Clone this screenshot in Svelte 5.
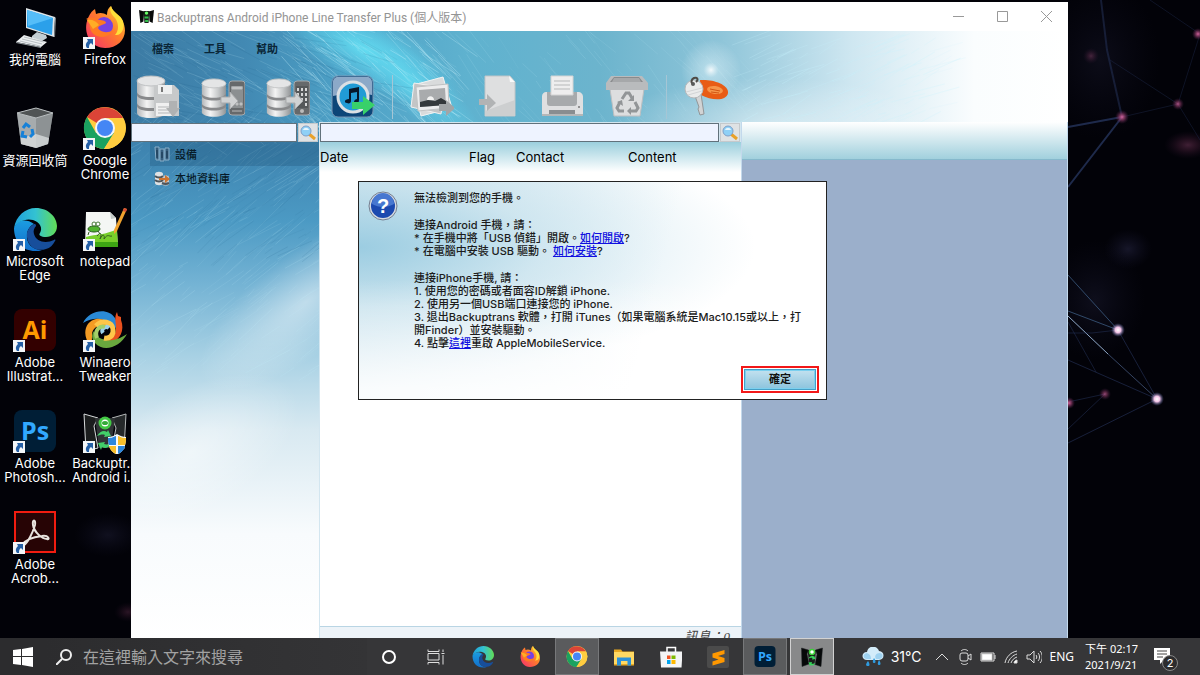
<script lang="ts">
  type Item = { icon: string; lines: string[]; shortcut?: boolean };

  const shortcuts: Item[] = [
    { icon: "pc", lines: ["我的電腦"] },
    { icon: "bin", lines: ["資源回收筒"] },
    { icon: "edge", lines: ["Microsoft", "Edge"], shortcut: true },
    { icon: "ai", lines: ["Adobe", "Illustrat..."], shortcut: true },
    { icon: "ps", lines: ["Adobe", "Photosh..."], shortcut: true },
    { icon: "acrobat", lines: ["Adobe", "Acrob..."], shortcut: true },
    { icon: "firefox", lines: ["Firefox"], shortcut: true },
    { icon: "chrome", lines: ["Google", "Chrome"], shortcut: true },
    { icon: "notepad", lines: ["notepad"], shortcut: true },
    { icon: "winaero", lines: ["Winaero", "Tweaker"], shortcut: true },
    { icon: "backup", lines: ["Backuptr...", "Android i..."], shortcut: true },
  ];

  const menus = ["檔案", "工具", "幫助"];

  const toolGroups = [
    ["db-save", "db-android", "db-iphone", "itunes"],
    ["photos", "export", "printer", "trash"],
    ["key"],
  ];

  const taskbarApps = [
    { icon: "cortana" },
    { icon: "taskview" },
    { icon: "edge" },
    { icon: "firefox" },
    { icon: "chrome", open: true },
    { icon: "explorer" },
    { icon: "store" },
    { icon: "sublime" },
    { icon: "ps", open: true },
    { icon: "line", open: true, active: true },
  ];

  // brushed texture behind the toolbar and the sidebar
  let seed = 7;
  function rand() {
    seed = (seed * 16807) % 2147483647;
    return seed / 2147483647;
  }

  function streaks(n: number, x: number, y: number, w: number, h: number, angle: number, alpha: number) {
    return Array.from({ length: n }, () => {
      const a = ((angle + rand() * 24 - 12) * Math.PI) / 180;
      const len = 8 + rand() * 44;
      const x1 = x + rand() * w;
      const y1 = y + rand() * h;
      return {
        x1,
        y1,
        x2: x1 + Math.cos(a) * len,
        y2: y1 + Math.sin(a) * len,
        o: alpha * (0.3 + rand() * 0.7),
      };
    });
  }

  const light = [
    ...streaks(160, 0, 0, 230, 110, 28, 0.18),
    ...streaks(170, 150, 0, 170, 100, 40, 0.35),
    ...streaks(90, 300, 0, 320, 100, 50, 0.14),
    ...streaks(110, 600, 20, 200, 90, -24, 0.3),
    ...streaks(260, -20, 110, 210, 250, -38, 0.16),
  ];
  const dark = [
    ...streaks(80, 0, 0, 240, 100, 20, 0.14),
    ...streaks(80, -20, 100, 200, 150, -34, 0.12),
  ];
</script>

{#snippet database()}
  <path d="M1 6v32c0 3 6 5 14 5s14-2 14-5V6z" fill="url(#metal)" />
  <path d="M1 17c0 3 6 5 14 5s14-2 14-5v3c0 3-6 5-14 5S1 23 1 20zM1 28c0 3 6 5 14 5s14-2 14-5v3c0 3-6 5-14 5S1 34 1 31z" fill="#88898b" />
  <ellipse cx="15" cy="6" rx="14" ry="5" fill="#e4e5e6" stroke="#bfc1c3" />
{/snippet}

{#snippet icon(name: string)}
  <svg class="icon" viewBox="0 0 44 44" aria-hidden="true">
    {#if name === "pc"}
      <path d="M19 30l5-4 9 3 1 3-5 3-10-3z" fill="#c3cdd3" />
      <path d="M13 2l29 9-1 20-28-9z" fill="#dfe5e8" />
      <path d="M14 4l26 8-1 17-25-8z" fill="#2ba0ea" />
      <path d="M14 4l26 8-25 8z" fill="#55bdf8" />
      <path d="M42 11l1 1-1 19-1 0z" fill="#80878c" />
      <path d="M3 36l8-7 23 7-6 5z" fill="#eceff1" />
      <path d="M3 36l25 5v1L3 37z" fill="#8f979c" />
      <path d="M7 35l20 5M9 33l20 5M11 31l20 5" stroke="#b9bfc4" fill="none" />
    {:else if name === "bin"}
      <path d="M4 6l19-5 17 5-5 31-12 4-15-4z" fill="#747879" />
      <path d="M4 6l19 5 1 30-16-4z" fill="#a6abad" />
      <path d="M23 11l17-5-5 31-12 4z" fill="#8d9294" />
      <path d="M4 6l19-5 17 5-17 5z" fill="#505455" stroke="#b9bec0" />
      <path d="M8 31l15-4 13 4-1 6-12 4-15-4z" fill="#dcdfe0" opacity=".75" />
      <g fill="none" stroke="#1681d8" stroke-width="3">
        <path d="M10 21l3-4 4 3M19 22l1 5-3 3M14 30l-5-1 1-5" />
      </g>
    {:else if name === "edge"}
      <path d="M1 20c0 14 9 23 21 23 3 0 5 0 7-1-10 0-16-7-15-15 0-5 3-9 7-11C13 10 4 12 1 20z" fill="url(#edgeBlue)" />
      <path d="M21 16c-5 3-8 8-7 13 1 10 10 15 19 12 4-1 7-4 9-8 1-1 0-2-1-1-8 4-18 2-20-6-1-3 0-6 2-8 0-2-1-2-2-2z" fill="#174e9b" />
      <path d="M1 20C3 8 12 0 23 0c12 0 21 9 21 18 0 7-5 11-11 11-5 0-8-2-6-4 3-5 0-11-7-13-8-2-16 2-19 8z" fill="url(#edgeGreen)" />
    {:else if name === "ai" || name === "ps"}
      <rect x="1" y="0" width="42" height="42" rx="8" fill={name === "ai" ? "#330000" : "#001e36"} />
      <text x="22" y="30" text-anchor="middle" font-size="25" font-weight="700" font-family="Open Sans, sans-serif" fill={name === "ai" ? "#ff9a00" : "#31a8ff"}>{name === "ai" ? "Ai" : "Ps"}</text>
    {:else if name === "acrobat"}
      <rect x="2" y="1" width="40" height="40" fill="#270405" stroke="#f21c10" stroke-width="2" />
      <path d="M9 34c3-5 11-8 20-9 7-1 8 4 5 3-5 0-13-7-14-14-1-6 3-6 2 0C20 21 15 32 10 35c-2 0-2-1-1-1z" fill="none" stroke="#e9e4df" stroke-width="2" />
    {:else if name === "firefox"}
      <path d="M5 12c2-5 5-8 7-9l1 5c4-2 8-1 11 1 0-4 1-7 4-9 1 6 8 8 11 14 8 14-1 28-17 28C8 42-1 27 5 12z" fill="url(#fox)" />
      <path d="M28 0c-2 4 0 8 4 12 4 5 4 13 0 17 7 1 10-7 8-14-2-6-10-8-12-15z" fill="#ffdf3a" />
      <circle cx="21" cy="20" r="9" fill="#7542e5" />
      <path d="M3 13c5-2 9-2 13 1 4 0 7 1 7 3-3 2-7 2-8 5 2 4 9 6 15 2-3 9-20 10-23-2-1-3 0-5 1-7z" fill="#ff7a24" />
      <path d="M4 14c5-1 9 1 12 5l-6 4z" fill="#ffad25" />
    {:else if name === "chrome"}
      <circle cx="22" cy="21" r="21" fill="#ffcd40" />
      <path d="M22 21L4 10a21 21 0 0 1 36 1H22z" fill="#db4437" />
      <path d="M4 10a21 21 0 0 0 17 32l10-16-18 0z" fill="#1aa260" />
      <path d="M22 11h18a21 21 0 0 1-19 31l10-16z" fill="#ffcd40" />
      <circle cx="22" cy="21" r="10" fill="#f3f6fa" />
      <circle cx="22" cy="21" r="8" fill="#4486f5" />
    {:else if name === "notepad"}
      <path d="M3 4h24l6 6 2 29H2z" fill="#f4f6f4" />
      <path d="M3 29c10-3 20-2 31-8l1 18H2z" fill="#78cf2b" />
      <path d="M2 34h33v5H2z" fill="#3da514" />
      <path d="M27 4l1 7 5-1z" fill="#c4cac8" />
      <ellipse cx="11" cy="21" rx="6" ry="3" fill="#51b32e" stroke="#265d1b" />
      <circle cx="11" cy="16" r="2" fill="#fff" stroke="#4a7a3a" />
      <circle cx="15" cy="16" r="2" fill="#fff" stroke="#4a7a3a" />
      <path d="M6 24l-1 3M15 23l2 3M14 28c4-5 5-2 3 3 3-6 5-4 4 0 4-6 5-2 8-3" stroke="#345b20" fill="none" />
      <path d="M41 0l3 1-10 22-3 3 0-4z" fill="#f0a22e" />
      <path d="M41 0l3 1-1 3-3-1z" fill="#d84c36" />
    {:else if name === "winaero"}
      <path d="M0 14C6 1 25-2 32 9c3 5 2 10-2 12C28 12 15 5 0 14z" fill="#2a8ad7" />
      <path d="M34 3l1 4 3 1 0 3c4 10-1 20-10 23-6 2-10 0-12-2 9 1 17-4 17-12 0-7-2-12 1-17z" fill="#e8501e" />
      <path d="M44 25c-7 13-23 19-32 9-3-4-4-8-1-12 3 9 17 14 33 3z" fill="#69a83e" />
      <path d="M8 37C-2 27 2 12 13 10c8-1 13 4 13 9-7-5-16-2-17 6 0 4 0 8-1 12z" fill="#f49b24" />
      <path d="M13 17c6-7 16-4 17 3 1 7-4 10-9 9" fill="none" stroke="#ffc649" stroke-width="5" />
      <path d="M20 24c-3-4 3-8 6-5" fill="none" stroke="#9ed0ea" stroke-width="4" />
      <path d="M14 29c-3-8 3-13 8-11" fill="none" stroke="#a5cf6a" stroke-width="4" />
    {:else if name === "backup"}
      <path d="M1 4l14 4-4 8 4 22-12 3z" fill="#1b1d1e" stroke="#d7dadb" />
      <path d="M29 8l14-4-2 35-12-1 4-20z" fill="#25282a" stroke="#b4b7b8" />
      <path d="M12 8h20l-4 30H16z" fill="#303436" />
      <circle cx="22" cy="13" r="5" fill="#fff" stroke="#42c744" stroke-width="3" />
      <ellipse cx="22" cy="13" rx="3" ry="2" fill="#36a93a" />
      <path d="M14 26c3-5 7-6 10-4l1-2 3 6-7 1 1-2c-3-1-5 0-8 1zM29 33c-3 5-7 6-10 4l-1 3-3-7 7-1-1 2c3 1 5 0 8-1z" fill="#42ce69" />
      <path d="M34 24c3 2 6 3 9 3 0 9-2 14-9 18-7-4-9-9-9-18 3 0 6-1 9-3z" fill="#f6fafb" />
      <path d="M33 26v9h-7c-1-3-1-4-1-7 4 0 5-1 8-2zM35 36h7c-1 4-3 6-7 8z" fill="#2c87dd" />
      <path d="M35 26c3 1 4 2 8 2 0 3 0 4-1 7h-7zM26 36h7v8c-4-2-6-4-7-8z" fill="#f8bf2b" />
    {:else if name === "line"}
      <path d="M1 4l14 4-3 8 4 20-14 5z" fill="#060809" stroke="#1c2022" />
      <path d="M29 8l14-4-3 37-12-4 4-20z" fill="#060809" stroke="#1c2022" />
      <path d="M13 8h17l-3 29H17z" fill="#191d1b" />
      <circle cx="22" cy="12" r="5" fill="#fff" stroke="#3ccf38" stroke-width="3" />
      <path d="M15 25c3-5 7-6 10-4l1-2 3 7-7 1 1-3c-3-1-5 0-8 1zM29 34c-3 5-7 6-10 4l-1 3-3-8 7-1-1 3c3 1 5 0 8-1z" fill="#37d45b" />
    {:else if name === "db-save"}
      {@render database()}
      <path d="M18 10h20l5 5v26H18z" fill="#c7c9ca" />
      <path d="M22 10h14v9H22z" fill="#eeefef" />
      <path d="M25 12h2v5h-2z" fill="#777" />
      <path d="M20 28h16v13H20z" fill="#f0f0f0" />
      <path d="M22 32h12M22 35h12M22 38h12" stroke="#b5b7b8" />
      <path d="M33 26h8v7h3l-7 9-7-9h3z" fill="#b0b2b3" />
    {:else if name === "db-android" || name === "db-iphone"}
      <g transform="translate(0 3) scale(.86 .9)">{@render database()}</g>
      <rect x="28" y="6" width="16" height="34" rx="3" fill="#66696b" stroke="#a8abad" />
      <rect x="30" y="11" width="12" height="22" fill={name === "db-iphone" ? "#55585a" : "#8b8f91"} />
      {#if name === "db-iphone"}
        <path d="M31 13h2v3h-2zM35 13h2v3h-2zM39 13h2v3h-2zM31 18h2v3h-2zM35 18h2v3h-2zM39 18h2v3h-2zM35 23h2v3h-2zM39 23h2v3h-2zM39 28h2v3h-2z" fill="#d5d6d7" />
        <circle cx="36" cy="36" r="2" fill="#bbb" />
      {:else}
        <path d="M31 12h10v2H31zM31 28h2v2h-2zM35 28h2v2h-2zM39 28h2v2h-2zM31 36h10" fill="#c9cbcc" stroke="#b9bbbc" />
      {/if}
      <path d="M20 22h9v-5l8 9-8 8v-6h-9z" fill="#d0d2d3" stroke="#a9abad" />
    {:else if name === "itunes"}
      <rect x="1" y="1" width="41" height="41" rx="6" fill="#0d4678" stroke="#7693b2" />
      <path d="M2 7c0-3 2-5 5-5h29c3 0 5 2 5 5v13C28 17 14 18 2 21z" fill="#8ca9c8" />
      <circle cx="22" cy="22" r="15" fill="#219bd5" stroke="#dbe0e4" stroke-width="3" />
      <path d="M16 28c-3 0-3-4 2-4V14l10-2v13c0 5-5 4-5 2s2-3 3-3v-7l-6 1v8c0 2-2 3-4 2z" fill="#07182a" />
      <path d="M21 27h11v-6l12 9-12 10v-6H21z" fill="#38d16a" />
    {:else if name === "photos"}
      <path d="M3 10l30-8 9 31-31 8z" fill="#d9dbdc" stroke="#f3f4f4" />
      <path d="M4 8l-3 24 30 7 4-26z" fill="#c3c5c6" stroke="#f1f1f1" />
      <path d="M6 12l32-3 1 24-31 3z" fill="#ececed" stroke="#c0c2c3" />
      <path d="M9 15l26-2 1 17-26 2z" fill="#a9abad" />
      <path d="M10 27l8-2 7 1 6-3 5 3v4l-26 2z" fill="#34383b" />
      <path d="M17 25c0-5 7-5 7 0z" fill="#f1f1f1" />
      <path d="M29 29h7v-4l9 8-9 8v-5h-7z" fill="#a2a5a7" />
    {:else if name === "export"}
      <path d="M10 1h25l5 6v34H10z" fill="#dedfe0" stroke="#c1c5c7" />
      <path d="M34 1l1 6h5z" fill="#fafafa" />
      <path d="M10 36l30-11v16H10z" fill="#cdcfd0" />
      <path d="M4 24h8v-5l9 9-9 8v-6H4z" fill="#b1b3b4" />
    {:else if name === "printer"}
      <path d="M6 17h32c3 0 5 2 5 5v17H2V21c0-2 2-4 4-4z" fill="#dfe0e1" />
      <path d="M7 17h30v11c0 2-1 3-3 3H10c-2 0-3-1-3-3z" fill="#a7aaac" />
      <path d="M11 1h22v19H11z" fill="#eee" stroke="#d4d4d4" />
      <path d="M14 6h16M14 10h16M14 14h16" stroke="#b6b8b9" />
      <path d="M9 35h26v4H9z" fill="#898d90" />
      <circle cx="39" cy="32" r="1" fill="#777" />
      <path d="M2 40h41" stroke="#b4b7b8" stroke-width="2" />
    {:else if name === "trash"}
      <path d="M5 14h34l-4 27H9z" fill="#dddedf" stroke="#bdbfc1" />
      <path d="M6 1h31l6 7v7H1V8z" fill="#b9bbbd" />
      <path d="M9 2h25l4 5H5z" fill="#898b8d" />
      <path d="M9 3h25l2 4H7z" fill="#a6a8aa" />
      <g fill="none" stroke="#929597" stroke-width="3">
        <path d="M17 24l4-6h3l3 5M30 27l3 6-2 3h-6M19 36h-5l-2-3 3-6" />
      </g>
      <path d="M29 20v6h-6zM26 32v8l-4-4zM12 27l5-2 1 6z" fill="#929597" />
    {:else if name === "key"}
      <path d="M16 5c14-1 29 5 28 13-1 8-16 8-27 2z" fill="#e85c15" />
      <ellipse cx="31" cy="15" rx="8" ry="4" fill="#f6954a" transform="rotate(7 31 15)" />
      <path d="M26 14l10 2M27 17l8 1" stroke="#d25514" />
      <path d="M11 21l6-2 3 20-4 1-1-3-1-3 1-2z" fill="#d1d3d4" stroke="#929698" />
      <circle cx="10" cy="14" r="9" fill="#eaebeb" stroke="#b5b8ba" />
      <path d="M9 9c-3-2-1-5 1-6 3-1 5 1 2 4" fill="none" stroke="#4f4a45" stroke-width="2" />
      <circle cx="9" cy="9" r="2" fill="#5a5a5a" />
      <path d="M2 17l16-4M4 20l14-4" stroke="#d2d4d6" />
    {:else if name === "cortana"}
      <circle cx="22" cy="22" r="12" fill="none" stroke="#fff" stroke-width="4" />
    {:else if name === "taskview"}
      <path d="M6 7v4h22V7M6 37v-4h22v4M6 15h22v13H6zM36 7v5M36 18v19M33 15h6" fill="none" stroke="#ddd" stroke-width="2" />
    {:else if name === "explorer"}
      <path d="M2 7h14l3 4h23v28H2z" fill="#e9a921" />
      <path d="M2 12h40v24H2z" fill="#ffd963" />
      <path d="M8 23h28v16h-7V30H16v9H8z" fill="#2c91d9" />
    {:else if name === "store"}
      <path d="M14 12V3h17v9" fill="none" stroke="#fff" stroke-width="3" />
      <path d="M0 11h45l-2 32H2z" fill="#f4f5f6" />
      <path d="M14 19h7v7h-7z" fill="#f05423" />
      <path d="M23 19h8v7h-8z" fill="#7fba00" />
      <path d="M14 28h7v8h-7z" fill="#00a4ef" />
      <path d="M23 28h8v8h-8z" fill="#ffb900" />
    {:else if name === "sublime"}
      <rect x="0" y="0" width="44" height="44" rx="4" fill="#4b4b4b" />
      <path d="M11 15l24-7v8l-13 4 13 4v8l-24 7v-8l12-4-12-4z" fill="#ff9800" />
    {/if}
  </svg>
{/snippet}

{#snippet magnifier()}
  <svg class="lens" viewBox="0 0 16 16" aria-hidden="true">
    <path d="M9 9l6 5" stroke="#e8a129" stroke-width="3" />
    <circle cx="6" cy="6" r="5" fill="#8fd0f6" stroke="#7f9fc8" />
    <path d="M3 5c1-3 5-3 6 0z" fill="#e6f6ff" />
  </svg>
{/snippet}

<div class="desktop">
  <svg class="defs" aria-hidden="true">
    <defs>
      <linearGradient id="metal">
        <stop offset="0" stop-color="#b4b6b8" />
        <stop offset=".35" stop-color="#f4f4f4" />
        <stop offset=".65" stop-color="#cbcdce" />
        <stop offset="1" stop-color="#929597" />
      </linearGradient>
      <linearGradient id="edgeBlue" x2="0" y2="1">
        <stop offset="0" stop-color="#1b9ce0" />
        <stop offset="1" stop-color="#126fcb" />
      </linearGradient>
      <linearGradient id="edgeGreen">
        <stop offset="0" stop-color="#1ea0dc" />
        <stop offset=".5" stop-color="#33c2d2" />
        <stop offset="1" stop-color="#62dd55" />
      </linearGradient>
      <linearGradient id="fox" x1="1" x2="0" y2="1">
        <stop offset="0" stop-color="#ffd93a" />
        <stop offset=".45" stop-color="#ff7c2b" />
        <stop offset="1" stop-color="#f42b72" />
      </linearGradient>
    </defs>
  </svg>

  <svg class="wallpaper" viewBox="0 0 1200 675" preserveAspectRatio="xMaxYMin slice" aria-hidden="true">
    <defs>
      <radialGradient id="pink">
        <stop offset="0" stop-color="#d0649c" />
        <stop offset=".4" stop-color="#98406f" stop-opacity=".7" />
        <stop offset="1" stop-color="#50204a" stop-opacity="0" />
      </radialGradient>
      <radialGradient id="star">
        <stop offset="0" stop-color="#fff" />
        <stop offset=".4" stop-color="#f2c3e6" />
        <stop offset="1" stop-color="#3a4c88" stop-opacity="0" />
      </radialGradient>
      <radialGradient id="haze">
        <stop offset="0" stop-color="#24243f" stop-opacity=".6" />
        <stop offset="1" stop-color="#14142c" stop-opacity="0" />
      </radialGradient>
    </defs>
    <rect width="1200" height="675" fill="#020208" />
    <ellipse cx="108" cy="535" rx="34" ry="22" fill="url(#haze)" opacity=".7" />
    <ellipse cx="128" cy="612" rx="14" ry="10" fill="url(#pink)" opacity=".2" />
    <ellipse cx="1100" cy="60" rx="60" ry="80" fill="url(#haze)" opacity=".5" />
    <ellipse cx="1128" cy="249" rx="24" ry="20" fill="url(#haze)" />
    <ellipse cx="1095" cy="300" rx="50" ry="60" fill="url(#haze)" opacity=".6" />
    <ellipse cx="1188" cy="145" rx="24" ry="14" fill="url(#pink)" opacity=".3" />
    <ellipse cx="1091" cy="56" rx="8" ry="8" fill="url(#pink)" opacity=".3" />
    <g fill="none" stroke="#26345c">
      <path d="M1101 0l6 50 15 67" stroke-width="2" opacity=".5" />
      <path d="M1068 127l54-10-54 70" stroke-width="2" opacity=".8" />
      <path d="M1122 117l56-13 22-70-50-34" opacity=".35" />
      <path d="M1178 104l22 36M1110 60l68 44" opacity=".35" />
      <path d="M1068 275l50 55-50-19" stroke="#3b5a80" opacity=".8" />
      <path d="M1068 316l40 38" stroke="#8fa8c8" />
      <path d="M1108 354l49 45" stroke="#4a6088" opacity=".7" />
      <path d="M1118 330l39 69M1068 360l89 39-89 44" opacity=".6" />
      <path d="M1068 333h24l26-3M1068 429l37-35-37 8M1068 322l28 50" opacity=".5" />
    </g>
    <circle cx="1122" cy="117" r="7" fill="url(#pink)" />
    <circle cx="1178" cy="104" r="6" fill="url(#pink)" opacity=".8" />
    <circle cx="1198" cy="34" r="6" fill="url(#pink)" />
    <circle cx="1105" cy="394" r="6" fill="url(#pink)" opacity=".7" />
    <circle cx="1069" cy="403" r="6" fill="url(#pink)" />
    <circle cx="1118" cy="330" r="7" fill="url(#star)" />
    <circle cx="1157" cy="399" r="7" fill="url(#star)" />
  </svg>

  <div class="workspace">
    <div class="shortcuts">
      {#each shortcuts as item}
        <button class="shortcut">
          <span class="picture">
            {@render icon(item.icon)}
            {#if item.shortcut}
              <svg class="arrow" viewBox="0 0 12 12" aria-hidden="true">
                <rect width="12" height="12" fill="#f3f6f8" />
                <path d="M4 2h6v6L8 6c-2 1-2 3-2 5H4C2 8 3 6 5 4z" fill="#245fa5" />
              </svg>
            {/if}
          </span>
          {#each item.lines as line}
            <span class="name">{line}</span>
          {/each}
        </button>
      {/each}
    </div>

    <main class="window">
      <svg class="texture" viewBox="0 0 937 636" preserveAspectRatio="none" aria-hidden="true">
        <defs>
          <linearGradient id="sky">
            <stop offset="0" stop-color="#3c7ba4" />
            <stop offset=".12" stop-color="#4289b3" />
            <stop offset=".22" stop-color="#4c9fc5" />
            <stop offset=".36" stop-color="#5fb2cf" />
            <stop offset=".5" stop-color="#6cb4cd" />
            <stop offset=".63" stop-color="#8fc5d9" />
            <stop offset=".77" stop-color="#cfe7f1" />
            <stop offset=".9" stop-color="#fafdfe" />
            <stop offset="1" stop-color="#fff" />
          </linearGradient>
          <linearGradient id="side" x2="0" y2="1">
            <stop offset="0" stop-color="#3d82ae" stop-opacity="0" />
            <stop offset=".06" stop-color="#3e84b0" />
            <stop offset=".2" stop-color="#4c9ac4" />
            <stop offset=".32" stop-color="#74b3d4" />
            <stop offset=".46" stop-color="#a8d1e4" />
            <stop offset=".6" stop-color="#d8e9f1" />
            <stop offset=".8" stop-color="#f8fbfd" />
            <stop offset="1" stop-color="#fff" />
          </linearGradient>
          <radialGradient id="cyan">
            <stop offset="0" stop-color="#66e4f6" stop-opacity=".9" />
            <stop offset=".5" stop-color="#5fd5ee" stop-opacity=".5" />
            <stop offset="1" stop-color="#5fd5ee" stop-opacity="0" />
          </radialGradient>
          <radialGradient id="glow">
            <stop offset="0" stop-color="#fff" stop-opacity=".9" />
            <stop offset=".25" stop-color="#e8f8fd" stop-opacity=".4" />
            <stop offset="1" stop-color="#fff" stop-opacity="0" />
          </radialGradient>
          <radialGradient id="mist">
            <stop offset="0" stop-color="#fff" stop-opacity=".5" />
            <stop offset="1" stop-color="#fff" stop-opacity="0" />
          </radialGradient>
        </defs>
        <rect width="937" height="636" fill="url(#sky)" />
        <ellipse cx="235" cy="48" rx="110" ry="36" fill="url(#cyan)" transform="rotate(28 235 48)" />
        <ellipse cx="285" cy="85" rx="90" ry="26" fill="url(#cyan)" opacity=".8" transform="rotate(42 285 85)" />
        <ellipse cx="640" cy="125" rx="160" ry="50" fill="url(#mist)" />
        <rect y="115" width="188" height="521" fill="url(#side)" />
        <ellipse cx="175" cy="300" rx="130" ry="50" fill="url(#mist)" transform="rotate(-38 175 300)" />
        <ellipse cx="60" cy="450" rx="120" ry="60" fill="url(#mist)" transform="rotate(-30 60 450)" />
        {#each light as s}
          <line x1={s.x1} y1={s.y1 + 20} x2={s.x2} y2={s.y2 + 20} stroke="#c9f4ff" opacity={s.o} />
        {/each}
        {#each dark as s}
          <line x1={s.x1} y1={s.y1 + 20} x2={s.x2} y2={s.y2 + 20} stroke="#17557f" opacity={s.o} />
        {/each}
        <circle cx="580" cy="68" r="30" fill="url(#glow)" />
      </svg>

      <header class="titlebar">
        <svg class="appicon" viewBox="0 0 44 44" aria-hidden="true">
          <path d="M0 3l15 4-2 30-9 4z" fill="#080a0a" />
          <path d="M29 7l15-4-4 38-9-4z" fill="#080a0a" />
          <path d="M13 6h18l-3 35H16z" fill="#172219" />
          <circle cx="22" cy="12" r="5" fill="#6f6" />
          <path d="M16 22h12v6H16zM18 32h9v6h-9z" fill="#31c14a" />
        </svg>
        <h1>Backuptrans Android iPhone Line Transfer Plus (個人版本)</h1>
        <div class="controls">
          <button aria-label="Minimize"><svg viewBox="0 0 11 11"><path d="M0 5.5h11" /></svg></button>
          <button aria-label="Maximize"><svg viewBox="0 0 11 11"><path d="M.5.5h10v10H.5z" /></svg></button>
          <button aria-label="Close"><svg viewBox="0 0 11 11"><path d="M0 0l11 11M11 0L0 11" /></svg></button>
        </div>
      </header>

      <nav class="menu">
        {#each menus as menu}
          <button>{menu}</button>
        {/each}
      </nav>

      <div class="toolbar">
        {#each toolGroups as group, i}
          {#if i > 0}
            <span class="divider"></span>
          {/if}
          <div class="tools">
            {#each group as tool}
              <button aria-label={tool}>{@render icon(tool)}</button>
            {/each}
          </div>
        {/each}
      </div>

      <div class="panes">
        <aside class="sources">
          <div class="search">
            <input type="text" aria-label="Search devices" />
            <button aria-label="Find device">{@render magnifier()}</button>
          </div>
          <button class="source selected">
            <svg viewBox="0 0 16 16" aria-hidden="true">
              <path d="M1 1h4v13H2zM6 3h4v12H6zM11 2h4v12h-4z" fill="#345d7d" stroke="#8ab0ca" />
              <path d="M3 4v8M8 6v6M13 5v7" stroke="#17354c" />
            </svg>
            設備
          </button>
          <button class="source">
            <svg viewBox="0 0 16 16" aria-hidden="true">
              <path d="M1 4c0-3 8-3 8 0v9c0 3-8 3-8 0z" fill="#dfe2e4" />
              <path d="M8 7c0-2 7-2 7 0v7c0 2-7 2-7 0z" fill="#c3c8cb" />
              <path d="M1 6c2 2 6 2 8 0M1 10c2 2 6 2 8 0M8 13c2 1 5 1 7 0" fill="none" stroke="#4d555b" stroke-width="2" />
              <path d="M5 8h6V5l5 4-5 4v-3H5z" fill="#cd732e" />
            </svg>
            本地資料庫
          </button>
        </aside>

        <section class="messages">
          <div class="search">
            <input type="text" aria-label="Search messages" />
            <button aria-label="Find message">{@render magnifier()}</button>
          </div>
          <div class="list">
            <table>
              <thead>
                <tr>
                  <th class="date">Date</th>
                  <th class="flag">Flag</th>
                  <th class="contact">Contact</th>
                  <th>Content</th>
                </tr>
              </thead>
            </table>
          </div>
          <footer>訊息：0</footer>
        </section>

        <section class="preview">
          <div class="band"></div>
        </section>
      </div>

      <div class="dialog" role="dialog" aria-label="無法檢測到您的手機">
        <svg class="question" viewBox="0 0 30 30" aria-hidden="true">
          <circle cx="15" cy="15" r="14" fill="#d5dae0" stroke="#747f91" />
          <circle cx="15" cy="15" r="12" fill="#1c49af" />
          <path d="M4 13a11 11 0 0 1 22 0c-7 4-15 4-22 0z" fill="#4777d0" />
          <text x="15" y="22" text-anchor="middle" font-family="Liberation Sans, sans-serif" font-size="20" font-weight="700" fill="#fff">?</text>
        </svg>
        <div class="text">
          <p>無法檢測到您的手機。</p>
          <p>
            連接Android 手機，請：<br />
            * 在手機中將「USB 偵錯」開啟。<a href="#usb">如何開啟</a>?<br />
            * 在電腦中安裝 USB 驅動。 <a href="#driver">如何安裝</a>?
          </p>
          <p>
            連接iPhone手機, 請：<br />
            1. 使用您的密碼或者面容ID解鎖 iPhone.<br />
            2. 使用另一個USB端口連接您的 iPhone.<br />
            3. 退出Backuptrans 軟體，打開 iTunes（如果電腦系統是Mac10.15或以上，打<br />
            開Finder）並安裝驅動。<br />
            4. 點擊<a href="#restart">這裡</a>重啟 AppleMobileService.
          </p>
        </div>
        <div class="actions">
          <button>確定</button>
        </div>
      </div>
    </main>
  </div>

  <div class="taskbar">
    <button class="start" aria-label="Start">
      <svg viewBox="0 0 20 20"><path d="M0 3l8-1v7H0zM9 2l11-2v9H9zM0 10h8v8l-8-1zM9 10h11v10L9 18z" fill="#fff" /></svg>
    </button>
    <label class="find">
      <svg viewBox="0 0 16 16" aria-hidden="true"><circle cx="10" cy="6" r="5" /><path d="M6 10l-6 6" /></svg>
      <input type="text" placeholder="在這裡輸入文字來搜尋" />
    </label>
    <div class="apps">
      {#each taskbarApps as app}
        <button class={app.icon} class:open={app.open} class:active={app.active} aria-label={app.icon}>
          {@render icon(app.icon)}
        </button>
      {/each}
    </div>
    <div class="tray">
      <svg class="weather" viewBox="0 0 22 20" aria-hidden="true">
        <path d="M5 13c-6 0-6-8 0-8 1-7 10-7 12-1 6 0 6 9 0 9z" fill="#d3ecfa" />
        <path d="M5 12c-4 0-5-5 0-6 3 1 4 3 4 6zM14 12c-2-3 0-6 4-6 4 1 3 6-1 6z" fill="#9fd2f0" />
        <path d="M6 14c-3 4-2 5 0 5s2-2 0-5zM12 11c-2 4-1 5 0 5 2 0 2-2 0-5zM17 13c-2 4-1 5 0 5 2 0 2-2 0-5z" fill="#2f9be0" />
      </svg>
      <span class="temp">31°C</span>
      <svg class="status chevron" viewBox="0 0 16 16" aria-hidden="true"><path d="M2 11l6-6 6 6" /></svg>
      <svg class="status" viewBox="0 0 16 16" aria-hidden="true">
        <rect x="3" y="4" width="8" height="8" rx="2" /><path d="M11 7l3-2v6l-3-2M4 2c2-2 5-2 7 0M4 14c2 2 5 2 7 0" />
      </svg>
      <svg class="status" viewBox="0 0 16 16" aria-hidden="true">
        <path d="M1 4h13v8H1zM15 6v4" /><path d="M2 5h10v6H2z" fill="#fff" />
      </svg>
      <svg class="status" viewBox="0 0 16 16" aria-hidden="true">
        <path d="M2 14C3 8 8 3 14 2M5 14c1-4 5-8 9-9M8 14c1-3 3-5 6-6" /><path d="M11 14c0-1 1-3 3-3v3z" fill="#fff" />
      </svg>
      <svg class="status" viewBox="0 0 16 16" aria-hidden="true">
        <path d="M1 6h3l4-4v12l-4-4H1zM10 6c1 1 1 3 0 4M12 4c2 2 2 6 0 8M14 2c3 3 3 9 0 12" />
      </svg>
      <span class="lang">ENG</span>
      <time datetime="2021-09-21T14:17">下午 02:17<br />2021/9/21</time>
      <button class="notice" aria-label="Notifications">
        <svg viewBox="0 0 24 24">
          <path d="M0 3h16v12h-6l-4 4v-4H0z" fill="#fff" />
          <path d="M3 6h10M3 9h10M3 12h6" stroke="#444" />
        </svg>
        <span class="count">2</span>
      </button>
    </div>
  </div>
</div>

<style>
  :global(body) {
    margin: 0;
    background: #020208;
  }

  .desktop {
    position: relative;
    display: flex;
    flex-direction: column;
    height: 100vh;
    overflow: hidden;
    font-family: Inter, "Noto Sans CJK TC", sans-serif;
    color: #111;
  }

  button {
    padding: 0;
    border: 0;
    background: none;
    font: inherit;
    color: inherit;
  }

  input {
    box-sizing: border-box;
    min-width: 0;
    font: inherit;
  }

  svg {
    display: block;
    flex: none;
  }

  .defs {
    position: absolute;
    width: 0;
    height: 0;
  }

  .wallpaper,
  .texture {
    position: absolute;
    inset: 0;
    width: 100%;
    height: 100%;
  }

  .icon {
    width: 44px;
    height: 44px;
  }

  .workspace {
    position: relative;
    display: flex;
    flex: 1;
    min-height: 0;
    padding: 2px 132px 0 0;
  }

  /* desktop shortcuts */
  .shortcuts {
    display: grid;
    grid-auto-flow: column;
    grid-template-rows: repeat(6, 101px);
    grid-auto-columns: 70px;
    width: 131px;
    flex: none;
    overflow: hidden;
  }

  .shortcut {
    display: flex;
    flex-direction: column;
    align-items: center;
    padding-top: 4px;
    color: #fff;
    font-size: 13px;
    line-height: 14px;
    white-space: nowrap;
  }

  .picture {
    position: relative;
    margin-bottom: 2px;
  }

  .arrow {
    position: absolute;
    left: 0;
    bottom: 1px;
    width: 12px;
    height: 12px;
  }

  /* application window */
  .window {
    position: relative;
    display: flex;
    flex: 1;
    flex-direction: column;
    min-width: 0;
    background: #fff;
  }

  .titlebar {
    position: relative;
    display: flex;
    align-items: center;
    height: 29px;
    padding-left: 8px;
    background: #fff;
  }

  .appicon {
    width: 15px;
    height: 15px;
  }

  h1 {
    flex: 1;
    margin: 0 0 0 3px;
    font-family: Roboto, "Noto Sans CJK TC", sans-serif;
    font-size: 12px;
    font-weight: 400;
    color: #949494;
    white-space: nowrap;
  }

  .controls {
    display: flex;
  }

  .controls button {
    width: 44px;
    height: 29px;
  }

  .controls svg {
    width: 11px;
    height: 11px;
    margin: auto;
    fill: none;
    stroke: #999;
  }

  .menu {
    position: relative;
    display: flex;
    gap: 30px;
    height: 34px;
    padding-left: 21px;
    font-size: 11px;
    font-weight: 700;
    color: #0a2638;
  }

  .toolbar {
    position: relative;
    display: flex;
    gap: 17px;
    padding: 10px 5px 3px;
  }

  .tools {
    display: flex;
    gap: 21px;
  }

  .divider {
    width: 1px;
    background: #a5c6d5;
  }

  .panes {
    position: relative;
    display: grid;
    grid-template-columns: 188px 1fr 327px;
    flex: 1;
    min-height: 0;
  }

  .search {
    display: flex;
    gap: 1px;
    height: 20px;
    padding: 1px 1px 0 0;
    box-sizing: border-box;
  }

  .search input {
    flex: 1;
    padding: 0 4px;
    border: 1px solid #61717b;
    background: #eef3ff;
    font-size: 11px;
  }

  .search button {
    display: grid;
    place-items: center;
    width: 20px;
    border: 1px solid #c5c9cc;
    background: #dfe2e4;
    box-sizing: border-box;
  }

  .lens {
    width: 16px;
    height: 16px;
  }

  .source {
    display: flex;
    align-items: center;
    gap: 5px;
    width: 169px;
    height: 24px;
    margin-left: 19px;
    padding-left: 4px;
    box-sizing: border-box;
    font-size: 11px;
    font-weight: 500;
    color: #071b29;
  }

  .source.selected {
    background: rgb(35 90 125 / 35%);
  }

  .source svg {
    width: 16px;
    height: 16px;
  }

  .messages {
    display: flex;
    flex-direction: column;
    min-width: 0;
    padding-left: 1px;
    background: #d3e6f0;
  }

  .list {
    flex: 1;
    background: #fff;
  }

  table {
    width: 100%;
    table-layout: fixed;
    border-collapse: collapse;
    font-size: 13px;
  }

  thead {
    background: linear-gradient(#9bcfdd, #fff);
  }

  th {
    height: 30px;
    padding: 0;
    text-align: left;
    font-weight: 400;
    color: #000;
  }

  .date {
    width: 149px;
  }

  .flag {
    width: 47px;
  }

  .contact {
    width: 112px;
  }

  footer {
    height: 11px;
    padding: 0 11px;
    border-top: 1px solid #b9d5e4;
    background: #edf3f8;
    overflow: hidden;
    text-align: right;
    font-family: "Liberation Serif", "Noto Sans CJK TC", serif;
    font-size: 13px;
    font-style: italic;
    line-height: 20px;
    color: #444;
  }

  .preview {
    border: solid #c3d9ec;
    border-width: 0 1px;
    background: #9bafcb;
  }

  .band {
    height: 38px;
    background: linear-gradient(#fff, #a1d0dd);
    border-bottom: 1px solid #86b9cc;
    box-sizing: border-box;
  }

  /* message box */
  .dialog {
    position: absolute;
    top: 179px;
    left: 227px;
    display: grid;
    grid-template-columns: 30px 1fr;
    grid-template-rows: 1fr auto;
    column-gap: 16px;
    width: 469px;
    height: 219px;
    padding: 9px 7px 6px 9px;
    box-sizing: border-box;
    border: 1px solid #222;
    background:
      linear-gradient(to bottom, transparent 45%, rgb(255 255 255 / 85%) 95%),
      radial-gradient(ellipse at 0 30%, rgb(150 202 224 / 90%), rgb(190 222 235 / 60%) 28%, transparent 60%),
      linear-gradient(105deg, #cfe4ee, #fff 62%);
  }

  .question {
    width: 30px;
    height: 30px;
  }

  .text {
    font-size: 11px;
    font-weight: 500;
    line-height: 13px;
    white-space: nowrap;
    color: #1c1c1c;
  }

  .text p {
    margin: 1px 0 14px;
  }

  .text a {
    color: #1010e0;
  }

  .actions {
    grid-column: 1 / -1;
    justify-self: end;
    padding: 1px;
    border: 2px solid #f21818;
    background: #fff;
  }

  .actions button {
    display: block;
    width: 72px;
    height: 21px;
    padding-bottom: 2px;
    border: 1px solid #459fc6;
    background: linear-gradient(#c3e1ef, #8cc4dd);
    box-shadow: inset 0 0 0 1px #7bd0ef;
    box-sizing: border-box;
    font-size: 11px;
    font-weight: 700;
    line-height: 16px;
  }

  /* taskbar */
  .taskbar {
    position: relative;
    display: flex;
    height: 37px;
    background: #363638;
    color: #fff;
  }

  .start {
    width: 45px;
    background: #2c2c2e;
  }

  .start svg {
    width: 20px;
    height: 20px;
    margin: auto;
  }

  .find {
    display: flex;
    align-items: center;
    gap: 11px;
    width: 322px;
    padding-left: 11px;
    box-sizing: border-box;
    background: linear-gradient(90deg, #2c2c2e, #343436);
  }

  .find svg {
    width: 16px;
    height: 16px;
    fill: none;
    stroke: #eee;
    stroke-width: 2;
  }

  .find input {
    flex: 1;
    padding: 0;
    border: 0;
    background: none;
    font-size: 16px;
    color: #fff;
  }

  .find input::placeholder {
    color: #a2a2a2;
    opacity: 1;
  }

  .apps {
    display: flex;
    gap: 3px;
  }

  .apps button {
    width: 44px;
    box-sizing: border-box;
  }

  .apps .icon {
    width: 22px;
    height: 22px;
    margin: auto;
  }

  .apps .open {
    background: #5a5b5d;
    border: 1px solid #77787a;
  }

  .apps .active {
    background: #88898a;
    border-color: #d2d2d2;
  }

  .tray {
    display: flex;
    align-items: center;
    gap: 7px;
    margin-left: auto;
    padding-right: 22px;
    font-size: 12px;
  }

  .weather {
    width: 22px;
    height: 20px;
  }

  .temp {
    font-size: 14px;
    margin-right: 6px;
  }

  .status {
    width: 16px;
    height: 16px;
    fill: none;
    stroke: #ddd;
  }

  .lang,
  time {
    font-family: "Noto Sans", "Noto Sans CJK TC", sans-serif;
  }

  time {
    margin: 0 9px 0 4px;
    font-size: 11px;
    line-height: 16px;
    white-space: nowrap;
  }

  .notice {
    position: relative;
  }

  .notice svg {
    width: 24px;
    height: 24px;
  }

  .count {
    position: absolute;
    right: 0;
    bottom: -2px;
    width: 14px;
    border: 1px solid #888;
    border-radius: 8px;
    background: #2c2c2e;
    font-size: 11px;
    line-height: 14px;
    text-align: center;
  }
</style>
